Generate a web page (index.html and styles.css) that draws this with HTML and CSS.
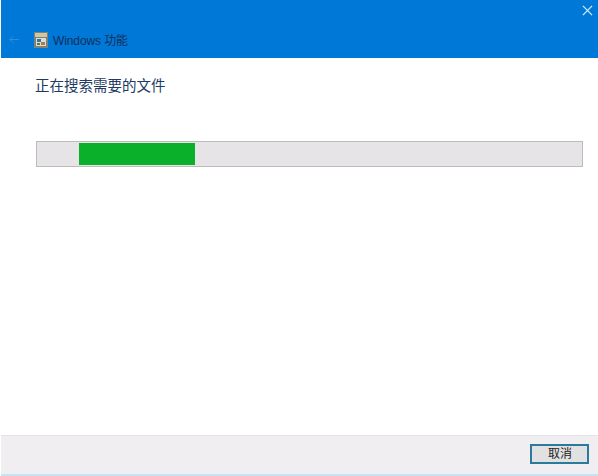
FILE: index.html
```html
<!DOCTYPE html>
<html>
  <head>
    <meta charset="UTF-8">
    <title>Windows 功能</title>
    <link rel="stylesheet" href="styles.css">
  </head>
  <body>
    <div class="dialog">
      <div class="titlebar">
        <div class="close-row">
          <svg class="close" width="11" height="11" viewBox="0 0 12 12">
            <path d="M1 1L11 11M11 1L1 11" stroke="#d5ecfb" stroke-width="1.4" fill="none"/>
          </svg>
        </div>
        <div class="title-row">
          <svg class="back" width="10" height="9" viewBox="0 0 12 10">
            <path d="M5 1L1 5L5 9M1 5H12" stroke="#2f8fdc" stroke-width="1.2" fill="none"/>
          </svg>
          <svg class="app-icon" width="14" height="16" viewBox="0 0 14 16">
            <rect x="0" y="0" width="14" height="16" fill="#7d8379"/>
            <rect x="1" y="1" width="12" height="4" fill="#cfc7a4"/>
            <rect x="2" y="6" width="10" height="8" fill="#dcdcd6"/>
            <rect x="3" y="7" width="4" height="3" fill="#3f6f9f"/>
            <rect x="7" y="10" width="4" height="3" fill="#b5793c"/>
            <rect x="3" y="11" width="3" height="2" fill="#4f7f4a"/>
          </svg>
          <span class="title">Windows 功能</span>
        </div>
      </div>
      <div class="content">
        <div class="heading">正在搜索需要的文件</div>
        <div class="progress">
          <div class="progress-bar"></div>
        </div>
      </div>
      <div class="footer">
        <button class="cancel">取消</button>
      </div>
      <div class="edge"></div>
    </div>
  </body>
</html>
```

FILE: styles.css
```css
* { margin: 0; padding: 0; box-sizing: border-box; }
html, body { width: 598px; height: 476px; overflow: hidden; background: #fff; }
body { font-family: "Liberation Sans", "Noto Sans CJK SC", sans-serif; }
.dialog { width: 598px; height: 476px; padding-left: 1px; display: flex; flex-direction: column; }
.titlebar { height: 58px; background: #0078d7; display: flex; flex-direction: column; }
.close-row { height: 24px; padding: 5px 5px 0 0; display: flex; justify-content: flex-end; }
.close { display: block; }
.title-row { height: 31px; padding-left: 8px; display: flex; align-items: center; }
.back { margin-right: 15px; }
.app-icon { margin-right: 5px; }
.title { font-size: 12px; letter-spacing: -0.1px; color: #12305c; }
.content { flex: 1; background: #fff; padding: 0 15px 0 35px; }
.heading { margin-top: 19px; margin-left: -1px; font-size: 14.5px; line-height: 18px; color: #223a62; }
.progress { margin-top: 46px; height: 26px; background: #e6e4e7; border: 1px solid #bcbcbc; padding: 1px 0 0 42px; }
.progress-bar { width: 116px; height: 22px; background: #0bb02a; }
.footer { height: 39px; background: #f1eef1; border-top: 1px solid #e3e3e3; padding: 8px 9px 0 0; display: flex; justify-content: flex-end; align-items: flex-start; }
.cancel { width: 59px; height: 20px; background: #e1e1e1; border: 2px solid #2a7a9c; padding-left: 1px; font-family: inherit; font-size: 12px; line-height: 14px; color: #222; }
.edge { height: 2px; background: #c4e4f6; }
```
